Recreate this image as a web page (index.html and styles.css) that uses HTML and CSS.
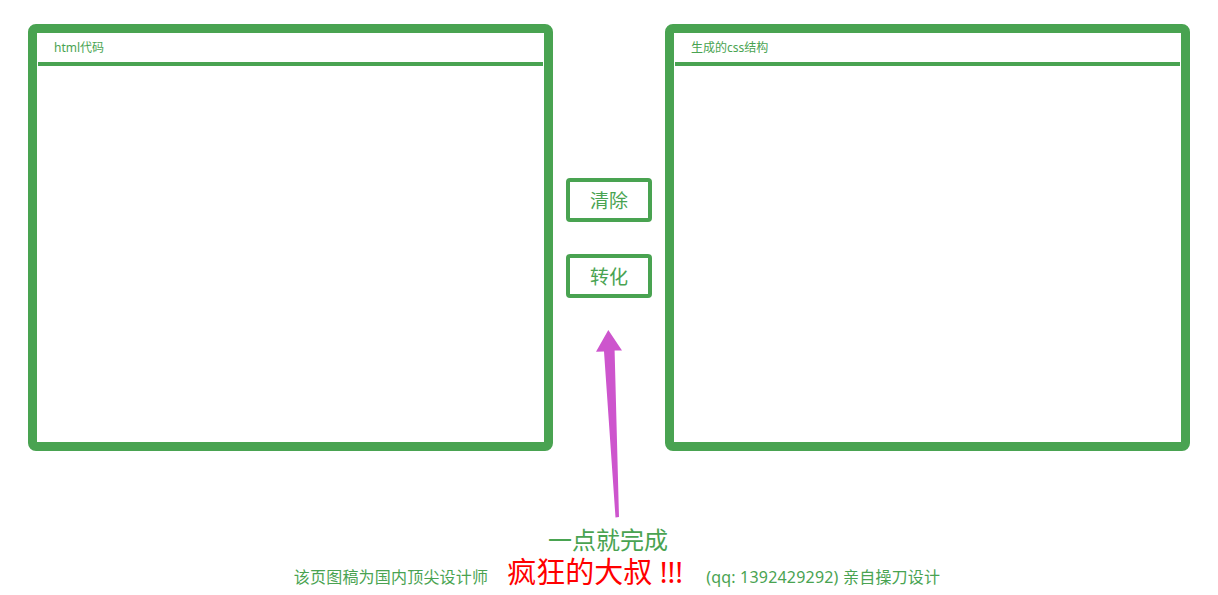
FILE: index.html
```html
<!DOCTYPE html>
<html lang="zh">
<head>
<meta charset="utf-8">
<title>html转css结构</title>
<link rel="stylesheet" href="styles.css">
</head>
<body>
<div class="page">
  <div class="workspace">
    <section class="panel">
      <div class="panel-head">html代码</div>
      <div class="panel-body"></div>
    </section>
    <div class="actions">
      <button class="btn" type="button">清除</button>
      <button class="btn" type="button">转化</button>
      <svg class="arrow" width="28" height="190" viewBox="0 0 28 190" aria-hidden="true">
        <path d="M12.3 0 L26 20.5 L18.6 20.5 L23 187 L19.5 187.5 L8 21.5 L0 21.7 Z" fill="#cd55cd"/>
      </svg>
    </div>
    <section class="panel">
      <div class="panel-head">生成的css结构</div>
      <div class="panel-body"></div>
    </section>
  </div>
  <footer class="footer">
    <div class="slogan">一点就完成</div>
    <div class="credit">
      <span class="credit-text">该页图稿为国内顶尖设计师</span>
      <span class="credit-name">疯狂的大叔 !!!</span>
      <span class="credit-text credit-tail">(qq: 1392429292) 亲自操刀设计</span>
    </div>
  </footer>
</div>
</body>
</html>
```

FILE: styles.css
```css
* { box-sizing: border-box; }

body {
  margin: 0;
  background: #ffffff;
  font-family: "Noto Sans", "Noto Sans CJK SC", sans-serif;
  color: #49a351;
}

.page {
  padding-top: 24px;
}

.workspace {
  display: flex;
  justify-content: center;
}

.panel {
  width: 525px;
  height: 427px;
  border: 9px solid #49a351;
  border-radius: 8px;
  background: #fff;
  display: flex;
  flex-direction: column;
}

.panel-head {
  height: 33px;
  margin: 0 1px;
  padding-left: 16px;
  line-height: 29px;
  font-size: 12px;
  color: #49a351;
  border-bottom: 4px solid #49a351;
}

.panel-body {
  flex: 1;
}

.actions {
  width: 112px;
  position: relative;
  display: flex;
  flex-direction: column;
  align-items: center;
  justify-content: center;
  gap: 32px;
}

.btn {
  width: 86px;
  height: 44px;
  border: 4px solid #49a351;
  border-radius: 4px;
  background: #fff;
  color: #49a351;
  font-family: "Noto Sans CJK SC", sans-serif;
  font-size: 19px;
  line-height: 1;
  padding: 0;
  cursor: pointer;
}

.arrow {
  position: absolute;
  left: 43px;
  top: 306px;
}

.footer {
  display: flex;
  flex-direction: column;
  align-items: center;
  padding-top: 74px;
}

.slogan {
  font-size: 24px;
  line-height: 30px;
  color: #49a351;
  margin-left: -2px;
}

.credit {
  display: flex;
  align-items: baseline;
  margin-top: 1px;
  margin-left: 16px;
}

.credit-text {
  font-size: 16px;
  letter-spacing: 0.2px;
  color: #49a351;
}

.credit-name {
  margin-left: 19px;
  font-size: 29px;
  line-height: 32px;
  color: #ff0000;
}

.credit-tail {
  margin-left: 23px;
}
```
